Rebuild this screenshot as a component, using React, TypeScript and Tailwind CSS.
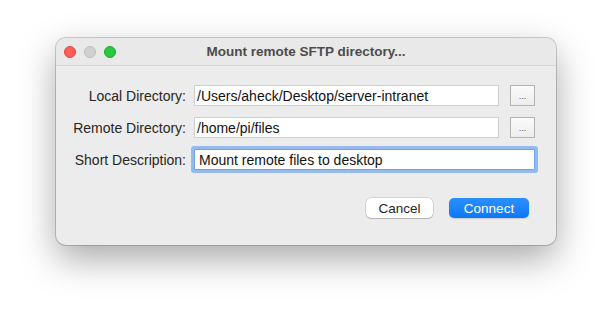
export default function App() {
  const font = { fontFamily: '"Liberation Sans", Arial, Helvetica, sans-serif' };

  const rows = [
    { label: "Local Directory:", value: "/Users/aheck/Desktop/server-intranet", browse: true },
    { label: "Remote Directory:", value: "/home/pi/files", browse: true },
  ];

  return (
    <div className="w-[612px] h-[320px] bg-white pt-[38px] pl-[56px] overflow-hidden" style={font}>
      <div className="w-[500px] h-[207px] rounded-[10px] bg-[#ececec] flex flex-col shadow-[0_0_0_1px_rgba(0,0,0,0.18),0_14px_36px_rgba(0,0,0,0.34)] overflow-hidden">
        {/* title bar */}
        <div className="relative h-[28px] flex items-center justify-center border-b border-[#d6d6d6] bg-[#e9e9e9] shrink-0">
          <div className="absolute left-[8px] top-[8px] flex gap-[8px]">
            <span className="w-[12px] h-[12px] rounded-full bg-[#fe5f57] border border-[#e0443e]" />
            <span className="w-[12px] h-[12px] rounded-full bg-[#d0d0d0] border border-[#bdbdbd]" />
            <span className="w-[12px] h-[12px] rounded-full bg-[#28c840] border border-[#1aab29]" />
          </div>
          <span className="text-[13.5px] font-bold text-[#4c4c4c] leading-none">Mount remote SFTP directory...</span>
        </div>

        {/* form */}
        <div className="flex flex-col gap-[11px] pt-[19px]">
          {rows.map((r) => (
            <div key={r.label} className="flex items-center h-[21px]">
              <div className="w-[130px] text-right text-[14px] text-[#262626] pt-[2px]">{r.label}</div>
              <div className="ml-[8px] w-[305px] h-[21px] bg-white border border-[#cfcfcf] flex items-center px-[2px] pt-[2px] text-[14px] text-[#111]">
                {r.value}
              </div>
              <button className="ml-[11px] w-[25px] h-[21px] border border-[#b3b3b3] bg-gradient-to-b from-[#fbfbfb] to-[#ededed] flex items-center justify-center text-[9px] text-[#555] leading-none pt-[2px]">
                ...
              </button>
            </div>
          ))}
          <div className="flex items-center h-[21px]">
            <div className="w-[130px] text-right text-[14px] text-[#262626] pt-[2px]">Short Description:</div>
            <div className="ml-[8px] w-[341px] h-[21px] bg-white border border-[#6fa2ec] shadow-[0_0_0_3px_rgba(105,160,240,0.65)] flex items-center px-[4px] pt-[2px] text-[14px] text-[#111] rounded-[1px]">
              Mount remote files to desktop
            </div>
          </div>
        </div>

        {/* buttons */}
        <div className="flex justify-end gap-[16px] pr-[27px] mt-[28px]">
          <button className="w-[67px] h-[20px] rounded-[5px] bg-white text-[13.5px] text-[#262626] shadow-[0_0_0_0.5px_rgba(0,0,0,0.2),0_1px_1px_rgba(0,0,0,0.15)] leading-none pt-[1px]">
            Cancel
          </button>
          <button className="w-[80px] h-[20px] rounded-[5px] bg-gradient-to-b from-[#2a8fff] to-[#0a78f8] text-[13.5px] text-white shadow-[0_1px_1px_rgba(0,0,0,0.15)] leading-none pt-[1px]">
            Connect
          </button>
        </div>
      </div>
    </div>
  );
}
